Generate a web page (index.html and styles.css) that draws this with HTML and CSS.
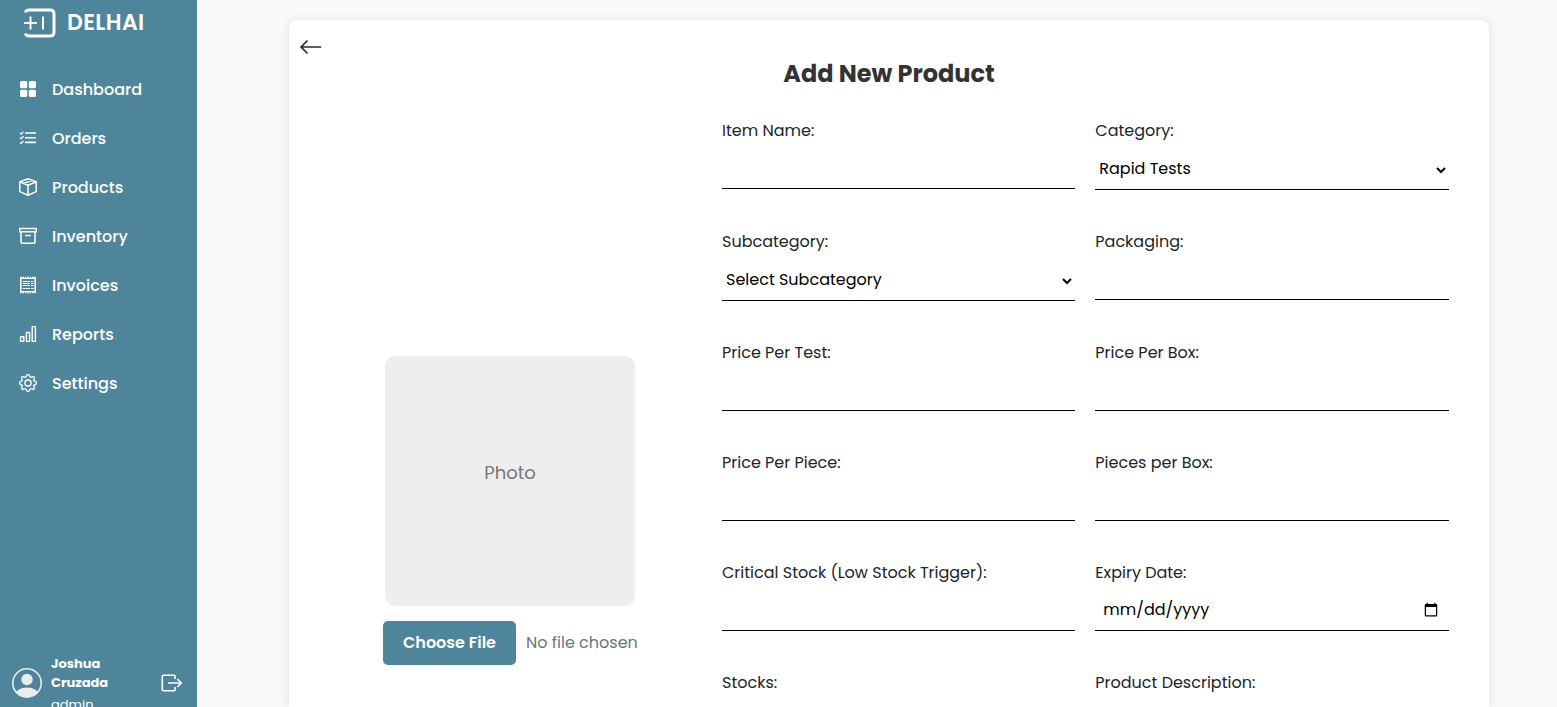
FILE: index.html
```html
<!DOCTYPE html>
<html lang="en">
<head>
<meta charset="utf-8">
<title>Add New Product</title>
<link rel="stylesheet" href="styles.css">
</head>
<body>
<aside class="sidebar">
  <div class="brand">
    <svg class="brand-logo" width="34" height="31" viewBox="0 0 34 31" fill="none" stroke="#fff">
      <path d="M2.500 4.500Q3 2 6 2H27Q31 2 31 6V24Q31 28 27 28H6Q3 28 2.500 25.500" stroke-width="3"/>
      <path d="M1 15H14M7.500 8.500V21.500M20 8.500V21.500" stroke-width="2"/>
    </svg>
    <span class="brand-name">DELHAI</span>
  </div>
  <nav class="nav">
    <a class="nav-item"><svg class="icon" viewBox="0 0 18 18" fill="#fff"><rect x="1" y="1" width="7.200" height="7.200" rx="1.500"/><rect x="9.800" y="1" width="7.200" height="7.200" rx="1.500"/><rect x="1" y="9.800" width="7.200" height="7.200" rx="1.500"/><rect x="9.800" y="9.800" width="7.200" height="7.200" rx="1.500"/></svg><span>Dashboard</span></a>
    <a class="nav-item"><svg class="icon" viewBox="0 0 18 18" fill="none" stroke="#fff" stroke-width="1.300"><path d="M6 4H17M6 8.700H17M6 13.400H17" stroke-width="1.600"/><path d="M1 4l1.200 1L4.500 2.600M1 8.700l1.200 1L4.500 7.300M1 13.400l1.200 1L4.500 12" stroke-width="1.300"/></svg><span>Orders</span></a>
    <a class="nav-item"><svg class="icon" viewBox="0 0 18 18" fill="none" stroke="#fff" stroke-width="1.500" stroke-linejoin="round"><path d="M9 .8L17.200 3.800V13.600L9 17.200L.8 13.600V3.800zM.8 3.800L9 7.200L17.200 3.800M9 7.200V17.200M4.800 5.400L13 2.300"/></svg><span>Products</span></a>
    <a class="nav-item"><svg class="icon" viewBox="0 0 18 18" fill="none" stroke="#fff" stroke-width="1.500" stroke-linejoin="round"><path d="M.7 1.600H17.300V4.800H.7zM2 4.800V14.500Q2 16.300 3.800 16.300H14.200Q16 16.300 16 14.500V4.800M6 8.500H12"/></svg><span>Inventory</span></a>
    <a class="nav-item"><svg class="icon" viewBox="0 0 18 18" fill="none" stroke="#fff"><path d="M1.800 1.500V16.500M16.200 1.500V16.500" stroke-width="1.500"/><path d="M1 1.500H17M1 16.500H17" stroke-width="1.700" stroke-dasharray="1.600 .8"/><path d="M2 2.500H16M2 15.500H16" stroke-width="1"/><path d="M3.800 5.500H11M3.800 7.500H11M3.800 9.500H11M3.800 12.500H11M12 5.500h2.500M12 7.500h2.500M12 9.500h2.500M12 12.500h2.500" stroke-width="1.200"/></svg><span>Invoices</span></a>
    <a class="nav-item"><svg class="icon" viewBox="0 0 18 18" fill="none" stroke="#fff" stroke-width="1.400" stroke-linejoin="round"><rect x="1.600" y="11.700" width="3.200" height="4.700" rx=".5"/><rect x="7.400" y="7.500" width="3.200" height="8.900" rx=".5"/><rect x="13.200" y="1.600" width="3.200" height="14.800" rx=".5"/></svg><span>Reports</span></a>
    <a class="nav-item"><svg class="icon" viewBox="0 0 16 16" fill="#fff" stroke="#fff" stroke-width=".25"><path d="M8 4.754a3.246 3.246 0 1 0 0 6.492 3.246 3.246 0 0 0 0-6.492M5.754 8a2.246 2.246 0 1 1 4.492 0 2.246 2.246 0 0 1-4.492 0"/><path d="M9.796 1.343c-.527-1.790-3.065-1.790-3.592 0l-.094.319a.873.873 0 0 1-1.255.520l-.292-.160c-1.640-.892-3.433.902-2.540 2.541l.159.292a.873.873 0 0 1-.520 1.255l-.319.094c-1.790.527-1.790 3.065 0 3.592l.319.094a.873.873 0 0 1 .520 1.255l-.160.292c-.892 1.640.901 3.434 2.541 2.540l.292-.159a.873.873 0 0 1 1.255.520l.094.319c.527 1.790 3.065 1.790 3.592 0l.094-.319a.873.873 0 0 1 1.255-.520l.292.160c1.640.893 3.434-.902 2.540-2.541l-.159-.292a.873.873 0 0 1 .520-1.255l.319-.094c1.790-.527 1.790-3.065 0-3.592l-.319-.094a.873.873 0 0 1-.520-1.255l.160-.292c.893-1.640-.902-3.433-2.541-2.540l-.292.159a.873.873 0 0 1-1.255-.520zm-2.633.283c.246-.835 1.428-.835 1.674 0l.094.319a1.873 1.873 0 0 0 2.693 1.115l.291-.160c.764-.415 1.600.420 1.184 1.185l-.159.292a1.873 1.873 0 0 0 1.116 2.692l.318.094c.835.246.835 1.428 0 1.674l-.319.094a1.873 1.873 0 0 0-1.115 2.693l.160.291c.415.764-.420 1.600-1.185 1.184l-.291-.159a1.873 1.873 0 0 0-2.693 1.116l-.094.318c-.246.835-1.428.835-1.674 0l-.094-.319a1.873 1.873 0 0 0-2.692-1.115l-.292.160c-.764.415-1.600-.420-1.184-1.185l.159-.291A1.873 1.873 0 0 0 1.945 8.930l-.319-.094c-.835-.246-.835-1.428 0-1.674l.319-.094A1.873 1.873 0 0 0 3.060 4.377l-.160-.292c-.415-.764.420-1.600 1.185-1.184l.292.159a1.873 1.873 0 0 0 2.692-1.115z"/></svg><span>Settings</span></a>
  </nav>
  <div class="user">
    <svg class="avatar" width="30" height="30" viewBox="0 0 30 30"><defs><clipPath id="face"><circle cx="15" cy="15" r="14"/></clipPath></defs><g fill="#ececec" clip-path="url(#face)"><circle cx="15" cy="11.500" r="5.700"/><ellipse cx="15" cy="27" rx="12" ry="7.500"/></g><circle cx="15" cy="15" r="14.200" fill="none" stroke="#ececec" stroke-width="1.600"/></svg>
    <div class="user-text"><div class="user-name">Joshua<br>Cruzada</div><div class="user-role">admin</div></div>
    <svg class="logout" width="22" height="18" viewBox="0 0 22 18" fill="none" stroke="#fff" stroke-width="1.600"><path d="M14 5V2.300Q14 1.300 13 1.300H2.300Q1.300 1.300 1.300 2.300V15.700Q1.300 16.700 2.300 16.700H13Q14 16.700 14 15.700V13M7 9H20M16.300 5L20.300 9L16.300 13" stroke-linejoin="round"/></svg>
  </div>
</aside>
<main class="content">
  <section class="card">
    <svg class="back" width="22" height="16" viewBox="0 0 22 16" fill="none" stroke="#292b2c" stroke-width="1.700" stroke-linecap="round" stroke-linejoin="round"><path d="M20.500 8H1M7 2L1 8l6 6"/></svg>
    <h1 class="title">Add New Product</h1>
    <div class="columns">
      <div class="photo-column">
        <div class="photo">Photo</div>
        <div class="file"><button class="file-button">Choose File</button><span class="file-name">No file chosen</span></div>
      </div>
      <form class="fields">
        <div class="field"><label class="label">Item Name:</label><input class="control"></div>
        <div class="field"><label class="label">Category:</label><select class="control select"><option>Rapid Tests</option></select></div>
        <div class="field"><label class="label">Subcategory:</label><select class="control select"><option>Select Subcategory</option></select></div>
        <div class="field"><label class="label">Packaging:</label><input class="control"></div>
        <div class="field"><label class="label">Price Per Test:</label><input class="control"></div>
        <div class="field"><label class="label">Price Per Box:</label><input class="control"></div>
        <div class="field"><label class="label">Price Per Piece:</label><input class="control"></div>
        <div class="field"><label class="label">Pieces per Box:</label><input class="control"></div>
        <div class="field"><label class="label">Critical Stock (Low Stock Trigger):</label><input class="control"></div>
        <div class="field"><label class="label">Expiry Date:</label><input type="date" class="control date"></div>
        <div class="field"><label class="label">Stocks:</label></div>
        <div class="field"><label class="label">Product Description:</label></div>
      </form>
    </div>
  </section>
</main>
</body>
</html>
```
FILE: styles.css
```css
* { box-sizing: border-box; }
body {
  margin: 0;
  height: 707px;
  display: flex;
  overflow: hidden;
  background: #f9f9f9;
  font: 16px/24px Poppins, Inter, sans-serif;
  color: #212529;
}
.sidebar {
  width: 197px;
  height: 707px;
  flex: none;
  display: flex;
  flex-direction: column;
  background: #4e859b;
  color: #fff;
  overflow: hidden;
}
.brand { display: flex; align-items: center; gap: 10px; padding: 7px 0 0 23px; height: 38px; }
.brand-logo { flex: none; margin-top: 1px; }
.brand-name { font-size: 22px; font-weight: 600; letter-spacing: 0.4px; }
.nav { padding-top: 27px; }
.nav-item { display: flex; align-items: center; gap: 15px; height: 49px; padding-left: 19px; font-weight: 500; }
.icon { width: 18px; height: 18px; flex: none; margin-bottom: 2px; }
.user { display: flex; margin-top: auto; height: 53px; padding-left: 12px; }
.avatar { margin-top: 14px; flex: none; }
.user-text { width: 119px; padding-left: 9px; font-size: 13px; line-height: 19px; }
.user-name { font-weight: 700; }
.user-role { margin-top: 3px; }
.logout { margin-top: 20px; flex: none; }
.content { flex: 1; padding: 20px 68px 0 92px; }
.card {
  width: 1200px;
  height: 687px;
  padding: 19px 40px 0;
  background: #fff;
  border-radius: 8px 8px 0 0;
  box-shadow: 0 0 10px rgba(0, 0, 0, .1);
}
.back { display: block; margin-left: -29px; }
.title { margin: 4px 0 0; font-size: 24px; line-height: 29px; font-weight: 700; text-align: center; color: #333; }
.columns { display: grid; grid-template-columns: 362px 726.6px; gap: 31px; margin-top: 30px; }
.photo-column { display: flex; flex-direction: column; align-items: center; padding-top: 238px; }
.photo {
  display: flex;
  align-items: center;
  justify-content: center;
  width: 250px;
  height: 250px;
  padding-bottom: 16px;
  border-radius: 10px;
  background: #efedee;
  color: #777;
  font-size: 18px;
}
.file { display: flex; align-items: center; gap: 10px; width: 254px; margin-top: 15px; white-space: nowrap; }
.file-button {
  flex: none;
  width: 133px;
  height: 44px;
  padding: 0;
  border: 0;
  border-radius: 5px;
  background: #4e859b;
  color: #fff;
  font: 600 16px/24px Poppins, Inter, sans-serif;
}
.file-name { color: #6c757d; }
.fields { display: grid; grid-template-columns: 1fr 1fr; column-gap: 20px; row-gap: 39px; align-items: start; }
.field { display: flex; flex-direction: column; align-items: flex-start; gap: 7px; }
.label { padding-top: 1px; }
.control {
  width: 100%;
  height: 39px;
  padding: 8px;
  border: 0;
  border-bottom: 1px solid #000;
  border-radius: 0;
  background: transparent;
  color: #000;
  font: 16px/24px Poppins, Inter, sans-serif;
}
.select { height: 40px; padding: 0 0 2px; }
.date { padding: 0 8px 2px; }
.date::-webkit-datetime-edit-month-field,
.date::-webkit-datetime-edit-day-field,
.date::-webkit-datetime-edit-year-field { padding: 0; }
```
